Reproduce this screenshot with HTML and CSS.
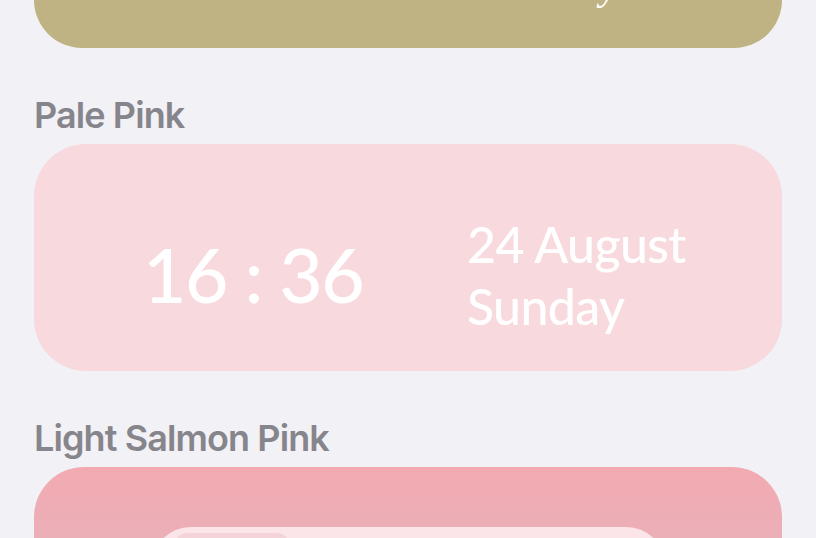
FILE: index.html
```html
<!DOCTYPE html>
<html>
<head>
<meta charset="utf-8">
<link rel="stylesheet" href="styles.css">
</head>
<body>
<div class="page">
  <div class="card olive">
    <span class="script">y</span>
  </div>
  <div class="label">Pale Pink</div>
  <div class="card pale">
    <div class="time">16 : 36</div>
    <div class="date">
      <div class="line">24 August</div>
      <div class="line">Sunday</div>
    </div>
  </div>
  <div class="label">Light Salmon Pink</div>
  <div class="card salmon">
    <div class="inner">
      <div class="inner-bar"></div>
    </div>
  </div>
</div>
</body>
</html>
```
FILE: styles.css
```css
html, body {
  margin: 0;
  padding: 0;
  background: #f2f1f6;
  overflow: hidden;
}
.page {
  width: 816px;
  height: 538px;
  padding: 0 34px;
  box-sizing: border-box;
  overflow: hidden;
}
.card {
  width: 748px;
  box-sizing: border-box;
}
.olive {
  height: 48px;
  background: #bfb383;
  border-radius: 0 0 50px 50px;
  overflow: hidden;
  padding-left: 566px;
}
.script {
  display: block;
  font-family: "Liberation Serif", serif;
  font-style: italic;
  color: #ffffff;
  font-size: 40px;
  line-height: 40px;
  margin-top: -34px;
}
.label {
  font-family: Inter, "Liberation Sans", sans-serif;
  font-weight: 600;
  font-size: 36px;
  letter-spacing: -0.9px;
  color: #86858b;
  height: 96px;
  line-height: 44px;
  padding-top: 45px;
  box-sizing: border-box;
}
.pale {
  height: 227px;
  background: #f8dade;
  border-radius: 52px;
  display: flex;
  align-items: center;
  padding-left: 109px;
  color: #ffffff;
  font-family: Lato, "Open Sans", sans-serif;
}
.time {
  font-size: 75px;
  font-weight: 500;
  width: 324px;
  letter-spacing: -1.5px;
  line-height: 1;
  margin-top: 34px;
}
.date {
  font-size: 50px;
  font-weight: 500;
  line-height: 62px;
  letter-spacing: -0.6px;
  margin-top: 34px;
}
.salmon {
  height: 120px;
  border-radius: 50px 50px 0 0;
  background: linear-gradient(180deg, #f3aab1 0%, #ebafb8 60%, #e8b3bd 100%);
  padding: 60px 116px 0 117px;
}
.inner {
  height: 60px;
  background: #fbe5e9;
  border-radius: 40px 40px 0 0;
  padding: 6px 0 0 24px;
  box-sizing: border-box;
}
.inner-bar {
  width: 114px;
  height: 40px;
  background: #f4d3d9;
  border-radius: 12px 12px 0 0;
}
```
